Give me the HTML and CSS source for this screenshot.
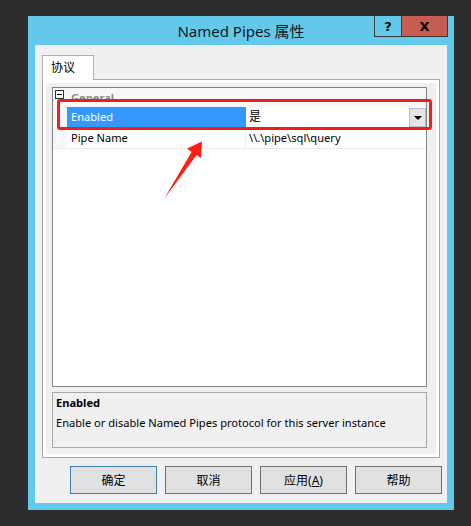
FILE: index.html
```html
<!DOCTYPE html>
<html lang="zh">
<head>
<meta charset="utf-8">
<title>Named Pipes 属性</title>
<link rel="stylesheet" href="styles.css">
</head>
<body>
<div class="window">
  <div class="titlebar">
    <div class="title">Named Pipes 属性</div>
    <div class="caption-btns">
      <div class="cap help">?</div>
      <div class="cap close">X</div>
    </div>
  </div>
  <div class="client">
    <div class="tabs"><div class="tab">协议</div></div>
    <div class="panel">
      <div class="grid">
        <div class="row cat">
          <div class="gutter"><span class="minus"></span></div>
          <div class="catname">General</div>
        </div>
        <div class="row sel">
          <div class="gutter"></div>
          <div class="name">Enabled</div>
          <div class="value"><span class="cjk">是</span><span class="drop"><span class="tri"></span></span></div>
        </div>
        <div class="row">
          <div class="gutter"></div>
          <div class="name">Pipe Name</div>
          <div class="value">\\.\pipe\sql\query</div>
        </div>
        <div class="highlight"></div>
        <svg class="arrow" width="50" height="64" viewBox="0 0 50 64">
          <polygon points="2,61 29.6,14 25,10.5 40,3.5 38.8,20 34.6,17" fill="#ff1e12"/>
        </svg>
      </div>
      <div class="desc">
        <div class="desc-title">Enabled</div>
        <div class="desc-text">Enable or disable Named Pipes protocol for this server instance</div>
      </div>
    </div>
    <div class="buttons">
      <div class="btn default">确定</div>
      <div class="btn">取消</div>
      <div class="btn">应用(<u>A</u>)</div>
      <div class="btn">帮助</div>
    </div>
  </div>
</div>
</body>
</html>
```
FILE: styles.css
```css
* { box-sizing: border-box; }
html, body { margin: 0; height: 100%; }
body {
  background: #2d2d2d;
  padding: 16px 0 0 28px;
  overflow: hidden;
  font-family: "Noto Sans", "Noto Sans CJK SC", sans-serif;
  font-size: 11.1px;
  color: #000;
}
.window {
  width: 426px;
  height: 494px;
  background: #63c9ea;
  display: flex;
  flex-direction: column;
}
.titlebar {
  height: 29px;
  display: grid;
  grid-template-columns: 1fr auto 1fr;
}
.title {
  grid-column: 2;
  font-size: 15px;
  line-height: 29px;
  color: #101828;
  padding-top: 1px;
}
.caption-btns {
  grid-column: 3;
  justify-self: end;
  display: flex;
  height: 21px;
  margin-right: 6px;
  border: 1px solid #3a3a3a;
  border-top: none;
}
.cap {
  height: 20px;
  display: flex;
  align-items: center;
  justify-content: center;
  font-weight: bold;
  font-size: 13px;
  font-family: "DejaVu Sans", sans-serif;
}
.help { width: 27px; border-right: 1px solid #3a3a3a; }
.close { width: 45px; background: #c75c50; font-size: 13px; }
.client {
  flex: 1;
  margin: 0 7px 7px;
  background: #f0f0f0;
  padding: 10px 0 0 7px;
}
.tabs { display: flex; }
.tab {
  position: relative;
  z-index: 1;
  width: 52px;
  height: 25px;
  margin-bottom: -1px;
  background: #fff;
  border: 1px solid #adadad;
  border-bottom: none;
  padding: 2px 0 0 8px;
  line-height: 20px;
  font-size: 12px;
}
.panel {
  width: 398px;
  height: 379px;
  border: 1px solid #a8a8a8;
  background: #f0f0f0;
  box-shadow: inset 0 0 0 3px #fff;
  padding: 7px 12px 9px 9px;
}
.grid {
  position: relative;
  height: 300px;
  border: 1px solid #828282;
  background: #fff;
}
.row {
  display: flex;
  height: 21px;
  border-bottom: 1px solid #ececec;
  line-height: 20px;
}
.row.cat {
  height: 19px;
  border-bottom: none;
  background: #f5f7fb;
}
.gutter {
  width: 14px;
  background: #f5f7fb;
  position: relative;
}
.minus {
  position: absolute;
  left: 2px;
  top: 2px;
  width: 9px;
  height: 9px;
  border: 1px solid #333;
  background: #fff;
}
.minus::after {
  content: "";
  position: absolute;
  left: 1px;
  top: 3px;
  width: 5px;
  height: 1px;
  background: #000;
}
.catname {
  padding-left: 4px;
  font-weight: bold;
  color: #8a8a8a;
  line-height: 19px;
}
.name {
  width: 179px;
  padding-left: 4px;
  border-right: 1px solid #ececec;
}
.sel .name {
  background: #3399ff;
  color: #fff;
  border-right: none;
}
.sel { border-bottom-color: #fff; }
.value {
  flex: 1;
  padding-left: 3px;
  position: relative;
}
.cjk { font-size: 12px; }
.drop {
  position: absolute;
  right: 0;
  top: 1px;
  width: 17px;
  height: 19px;
  background: #e5e5e5;
  border: 1px solid #bdbdbd;
  display: flex;
  align-items: center;
  justify-content: center;
}
.tri {
  width: 0;
  height: 0;
  border-left: 4px solid transparent;
  border-right: 4px solid transparent;
  border-top: 4px solid #000;
}
.highlight {
  position: absolute;
  left: 4px;
  top: 11px;
  width: 375px;
  height: 31px;
  border: 3px solid #f51c1c;
  border-radius: 3px;
}
.arrow {
  position: absolute;
  left: 109px;
  top: 50px;
}
.desc {
  margin-top: 5px;
  height: 56px;
  border: 1px solid #a8a8a8;
  padding: 1px 0 0 3px;
}
.desc-title {
  font-weight: bold;
  line-height: 18px;
}
.desc-text {
  margin-top: 2px;
  line-height: 18px;
}
.buttons {
  display: flex;
  gap: 8px;
  margin-top: 8px;
  padding-left: 28px;
}
.btn {
  width: 87px;
  height: 28px;
  background: #e1e1e1;
  border: 1px solid #707070;
  display: flex;
  align-items: center;
  justify-content: center;
  font-size: 12px;
}
.btn.default { border-color: #3c7fb1; }
```
